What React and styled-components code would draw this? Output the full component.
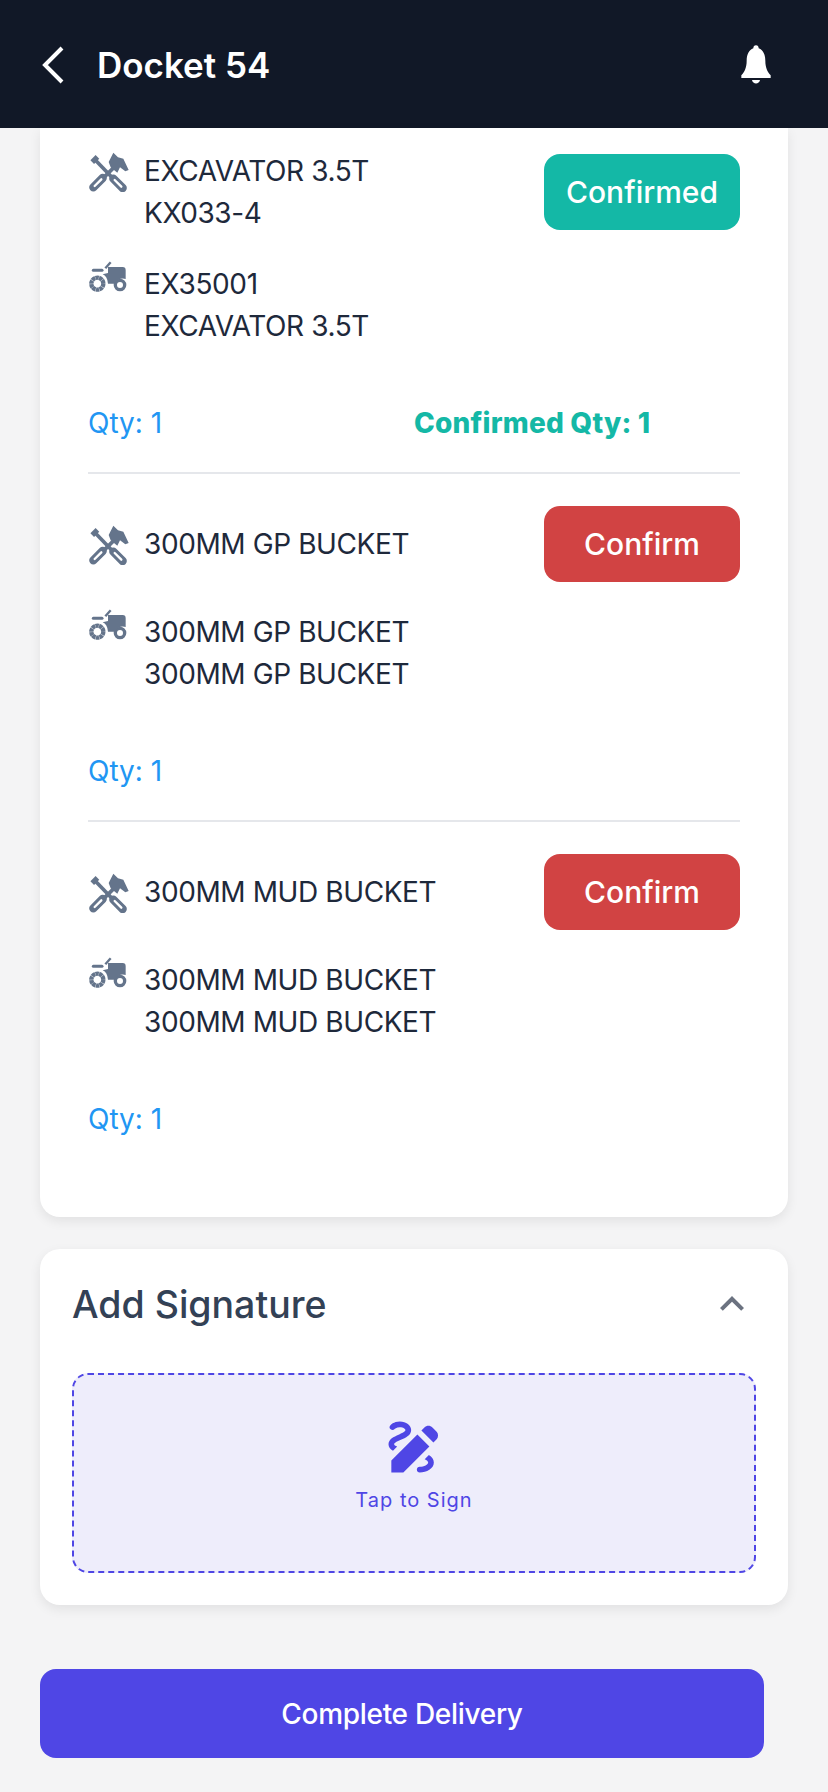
import styled, { createGlobalStyle } from "styled-components";
import { MdDraw, MdKeyboardArrowUp } from "react-icons/md";

const GlobalStyle = createGlobalStyle`
  * {
    box-sizing: border-box;
  }
  body {
    margin: 0;
    background: #f4f4f5;
    font-family: Inter, "Liberation Sans", sans-serif;
  }
`;

const items = [
  {
    title: ["EXCAVATOR 3.5T", "KX033-4"],
    vehicle: ["EX35001", "EXCAVATOR 3.5T"],
    confirmed: true,
  },
  {
    title: ["300MM GP BUCKET"],
    vehicle: ["300MM GP BUCKET", "300MM GP BUCKET"],
  },
  {
    title: ["300MM MUD BUCKET"],
    vehicle: ["300MM MUD BUCKET", "300MM MUD BUCKET"],
  },
];

function ToolsIcon() {
  return (
    <svg width="40" height="40" viewBox="15 12 120 120" fill="none" stroke="#64748b">
      <path d="M27 29 L38 40" strokeWidth="22" />
      <path d="M36 38 L88 92" strokeWidth="11" />
      <path d="M88 92 L116 120" strokeWidth="25" strokeLinecap="round" />
      <path d="M92 96 L112 116" strokeWidth="7" stroke="#fff" strokeLinecap="round" />
      <path d="M90 58 L56 92" strokeWidth="11" />
      <path d="M56 90 L28 118" strokeWidth="25" strokeLinecap="round" />
      <path d="M52 94 L32 114" strokeWidth="7" stroke="#fff" strokeLinecap="round" />
      <path
        d="M74 42 L88 14 L102 28 L118 32 L134 66 L124 70 L108 58 L100 74 L80 58 Z"
        fill="#64748b"
        stroke="none"
      />
    </svg>
  );
}

function TractorIcon() {
  return (
    <svg width="39" height="32" viewBox="15 24 117 96" fill="none" stroke="#64748b">
      <circle cx="40" cy="92" r="18" strokeWidth="13" strokeDasharray="10 1" />
      <circle cx="108" cy="96" r="14" strokeWidth="10" />
      <path d="M28 52 L54 52" strokeWidth="9" strokeLinecap="round" />
      <path d="M64 46 L80 28" strokeWidth="7" />
      <path
        d="M72 42 L116 42 Q125 42 125 52 L125 78 Q106 72 92 92 L72 92 Q70 70 56 64 L72 60 Z"
        fill="#64748b"
        stroke="none"
      />
    </svg>
  );
}

function BellIcon() {
  return (
    <svg width="32" height="42" viewBox="24 10 96 126" fill="#fff">
      <path d="M72 14 C77 14 80 18 80 23 C93 28 100 42 100 60 C100 80 106 93 116 104 L116 112 L28 112 L28 104 C38 93 44 80 44 60 C44 42 51 28 64 23 C64 18 67 14 72 14 Z" />
      <path d="M60 118 L84 118 C82 132 62 132 60 118 Z" />
    </svg>
  );
}

export default function App() {
  return (
    <Page>
      <GlobalStyle />
      <Header>
        <HeaderLeft>
          <svg width="24" height="40" viewBox="0 0 24 40" fill="none">
            <path d="M21 3 L4 20 L21 37" stroke="#fff" strokeWidth="4" />
          </svg>
          <HeaderTitle>Docket 54</HeaderTitle>
        </HeaderLeft>
        <BellIcon />
      </Header>
      <Main>
        <ItemsCard>
          {items.map((item, i) => (
            <Item key={i} $last={i === items.length - 1}>
              <TitleRow>
                <IconText>
                  <IconSlot $top={2}>
                    <ToolsIcon />
                  </IconSlot>
                  <Lines>
                    {item.title.map((line) => (
                      <div key={line}>{line}</div>
                    ))}
                  </Lines>
                </IconText>
                <ConfirmButton $confirmed={item.confirmed}>
                  {item.confirmed ? "Confirmed" : "Confirm"}
                </ConfirmButton>
              </TitleRow>
              <VehicleRow>
                <IconSlot $top={-2}>
                  <TractorIcon />
                </IconSlot>
                <Lines>
                  {item.vehicle.map((line, n) => (
                    <div key={n}>{line}</div>
                  ))}
                </Lines>
              </VehicleRow>
              <QtyRow>
                <Qty>Qty: 1</Qty>
                {item.confirmed && <ConfirmedQty>Confirmed Qty: 1</ConfirmedQty>}
              </QtyRow>
            </Item>
          ))}
        </ItemsCard>
        <SignatureCard>
          <SignatureHeader>
            <SignatureTitle>Add Signature</SignatureTitle>
            <MdKeyboardArrowUp size={48} color="#6b7280" />
          </SignatureHeader>
          <SignBox>
            <MdDraw size={68} color="#4f46e5" />
            <SignLabel>Tap to Sign</SignLabel>
          </SignBox>
        </SignatureCard>
        <CompleteButton>Complete Delivery</CompleteButton>
      </Main>
    </Page>
  );
}

const Page = styled.div`
  width: 828px;
  height: 1792px;
  overflow: hidden;
  background: #f4f4f5;
`;
const Header = styled.header`
  height: 128px;
  background: #111827;
  display: flex;
  align-items: center;
  justify-content: space-between;
  padding: 2px 56px 0 41px;
`;
const HeaderLeft = styled.div`
  display: flex;
  align-items: center;
  gap: 32px;
`;
const HeaderTitle = styled.h1`
  margin: 0;
  color: #fff;
  font-size: 35px;
  font-weight: 600;
`;
const Main = styled.main`
  padding: 0 40px;
`;
const ItemsCard = styled.section`
  background: #fff;
  border-radius: 0 0 20px 20px;
  box-shadow: 0 4px 12px rgba(0, 0, 0, 0.08);
  padding: 22px 48px 49px;
`;
const Item = styled.div`
  padding-bottom: 28px;
  margin-bottom: 32px;
  border-bottom: 2px solid #e5e7eb;
  ${(p) => p.$last && `border-bottom: none; margin-bottom: 0;`}
`;
const TitleRow = styled.div`
  display: flex;
  align-items: center;
  justify-content: space-between;
`;
const IconText = styled.div`
  display: flex;
  align-items: flex-start;
`;
const IconSlot = styled.div`
  width: 56px;
  flex-shrink: 0;
  display: flex;
  padding-left: 1px;
  margin-top: ${(p) => p.$top || 0}px;
`;
const Lines = styled.div`
  color: #1e293b;
  font-size: 28px;
  line-height: 42px;
  letter-spacing: -0.4px;
`;
const ConfirmButton = styled.button`
  width: 196px;
  height: 76px;
  border: none;
  border-radius: 16px;
  background: ${(p) => (p.$confirmed ? "#14b8a6" : "#d14343")};
  color: #fff;
  font-family: inherit;
  font-size: 30px;
  font-weight: 500;
`;
const VehicleRow = styled.div`
  display: flex;
  align-items: flex-start;
  margin-top: 29px;
`;
const QtyRow = styled.div`
  display: grid;
  grid-template-columns: 1fr 1fr;
  margin-top: 55px;
  font-size: 28px;
  line-height: 42px;
`;
const Qty = styled.div`
  color: #2196f3;
`;
const ConfirmedQty = styled.div`
  color: #14b8a6;
  font-weight: 800;
  letter-spacing: 0.2px;
`;
const SignatureCard = styled.section`
  margin-top: 32px;
  background: #fff;
  border-radius: 20px;
  box-shadow: 0 4px 12px rgba(0, 0, 0, 0.08);
  padding: 25px 32px 32px;
`;
const SignatureHeader = styled.div`
  display: flex;
  align-items: center;
  justify-content: space-between;
  height: 60px;
  margin-bottom: 39px;
`;
const SignatureTitle = styled.h2`
  margin: 0;
  color: #334155;
  font-size: 37.5px;
  font-weight: 500;
`;
const SignBox = styled.div`
  height: 200px;
  border: 2px dashed #4f46e5;
  border-radius: 16px;
  background: #eeedfb;
  display: flex;
  flex-direction: column;
  align-items: center;
  justify-content: center;
  gap: 7px;
  padding-bottom: 22px;
`;
const SignLabel = styled.div`
  color: #4f46e5;
  font-size: 20px;
  letter-spacing: 1px;
`;
const CompleteButton = styled.button`
  display: block;
  width: 724px;
  height: 89px;
  margin-top: 64px;
  border: none;
  border-radius: 16px;
  background: #4f46e5;
  color: #fff;
  font-family: inherit;
  font-size: 28px;
  font-weight: 500;
  letter-spacing: -0.3px;
`;
